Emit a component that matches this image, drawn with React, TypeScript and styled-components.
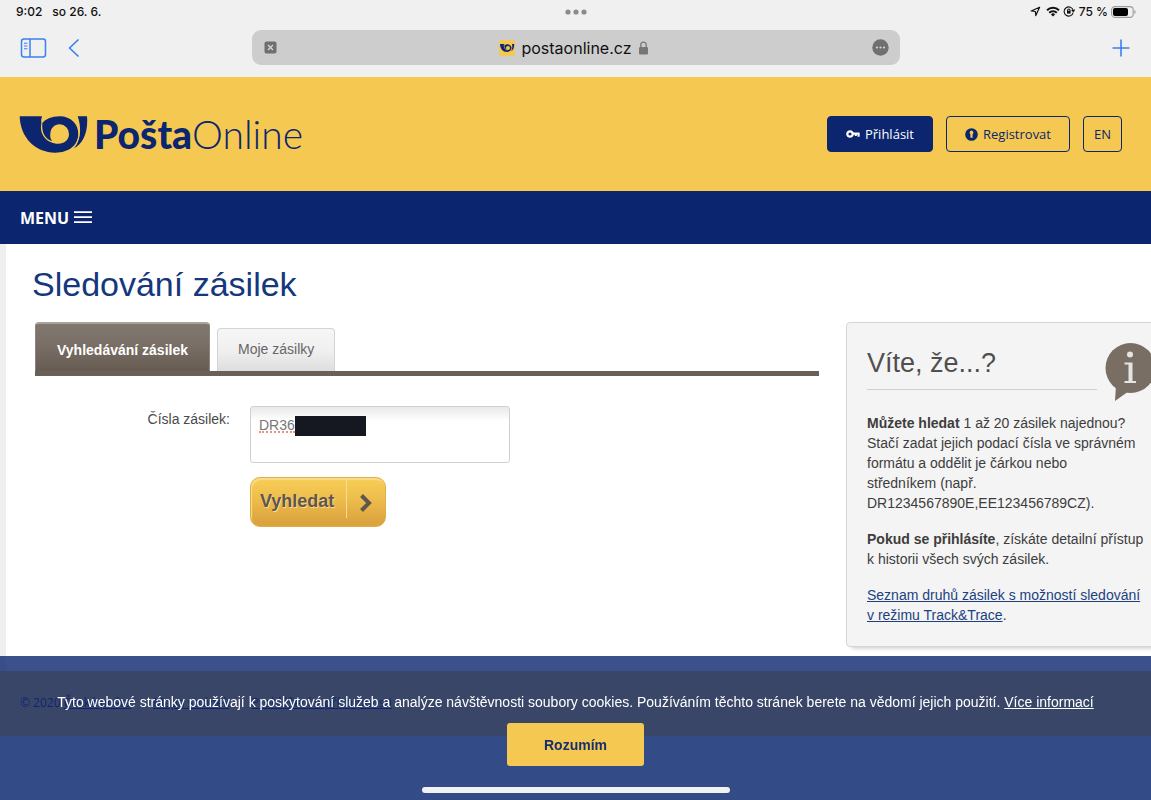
import React from "react";
import styled, { createGlobalStyle, css } from "styled-components";

const navy = "#0b256f";
const yellow = "#f5c951";
const iosBlue = "#3b7ff5";
const helvetica = `"Liberation Sans", Arial, sans-serif`;

const GlobalStyle = createGlobalStyle`
  * { box-sizing: border-box; }
  html { height: 100%; }
  body { margin: 0; min-height: 100%; background: #d3e0e6; font-family: ${helvetica}; overflow-x: hidden; }
  h1, h2, p { margin: 0; font-weight: 400; }
  button { cursor: pointer; font-family: inherit; }
`;

const Page = styled.div`
  overflow: hidden;
`;

const Chrome = styled.div`
  background: #f0f0f0;
  color: #111;
  font-family: Inter, sans-serif;
`;

const StatusBar = styled.div`
  display: grid;
  grid-template-columns: 1fr auto 1fr;
  align-items: center;
  height: 24px;
  padding: 0 15px 0 16px;
  font-size: 12px;
  font-weight: 500;
  line-height: 14px;
`;

const StatusGroup = styled.div<{ $end?: boolean }>`
  display: flex;
  align-items: center;
  gap: ${(p) => (p.$end ? "3px" : "10px")};
  justify-content: ${(p) => (p.$end ? "flex-end" : "flex-start")};
  padding-bottom: 1px;
  svg { display: block; }
`;

const Toolbar = styled.div`
  display: grid;
  grid-template-columns: 1fr 648px 1fr;
  align-items: center;
  height: 53px;
  padding: 0 20px 6px;
`;

const ToolGroup = styled.div<{ $end?: boolean }>`
  display: flex;
  align-items: center;
  gap: 20px;
  justify-content: ${(p) => (p.$end ? "flex-end" : "flex-start")};
`;

const IconButton = styled.button`
  display: flex;
  padding: 0;
  border: 0;
  background: none;
  color: ${iosBlue};
`;

const AddressBar = styled.div`
  display: flex;
  align-items: center;
  justify-content: space-between;
  height: 35px;
  padding: 0 11px 0 12px;
  border-radius: 9px;
  background: #cdcdcd;
`;

const Address = styled.div`
  display: flex;
  align-items: center;
  gap: 6px;
  font-size: 16px;
`;

const Header = styled.header`
  display: flex;
  align-items: center;
  justify-content: space-between;
  height: 114px;
  padding: 0 29px 0 19px;
  background: ${yellow};
`;

const Logo = styled.a`
  display: flex;
  align-items: center;
  gap: 6px;
  color: ${navy};
  font-family: Lato, sans-serif;
  font-size: 39px;
  font-weight: 300;
  line-height: 40px;
  text-decoration: none;
  b { font-weight: 900; }
`;

const Account = styled.div`
  display: flex;
  gap: 13px;
`;

const HeaderButton = styled.button<{ $solid?: boolean; $compact?: boolean }>`
  display: flex;
  align-items: center;
  justify-content: center;
  gap: 5px;
  height: 36px;
  padding: 0 ${(p) => (p.$compact ? "10px" : "18px")};
  border: 1px solid ${navy};
  border-radius: 4px;
  background: ${(p) => (p.$solid ? navy : "transparent")};
  color: ${(p) => (p.$solid ? "#fff" : navy)};
  font-family: "Open Sans", sans-serif;
  font-size: 13px;
`;

const NavBar = styled.nav`
  display: flex;
  align-items: center;
  height: 53px;
  padding: 0 20px;
  background: ${navy};
`;

const MenuButton = styled.button`
  display: flex;
  align-items: center;
  gap: 5px;
  padding: 0;
  border: 0;
  background: none;
  color: #fff;
  font-family: "Open Sans", sans-serif;
  font-size: 16px;
  font-weight: 700;
`;

const Main = styled.main`
  margin-left: 6px;
  padding: 16px 0 24px 29px;
  background: #fff;
  box-shadow: -6px 0 0 #efefef;
`;

const Title = styled.h1`
  margin-left: -3px;
  color: #14377d;
  font-size: 34px;
  line-height: 48px;
`;

const Columns = styled.div`
  display: flex;
  align-items: flex-start;
  gap: 27px;
  margin: 14px -26px 0 0;
`;

const Search = styled.section`
  flex: 1;
  min-width: 0;
`;

const Tabs = styled.div`
  display: flex;
  align-items: flex-end;
  gap: 7px;
  border-bottom: 5px solid #6a6057;
`;

const Tab = styled.button<{ $active?: boolean }>`
  border-radius: 4px 4px 0 0;
  font-size: 14px;
  ${(p) =>
    p.$active
      ? css`
          height: 49px;
          padding: 4px 21px 0;
          border: 1px solid #8d857d;
          border-top: 2px solid #a9a39c;
          border-bottom: 0;
          background: linear-gradient(#80776e, #7a7067 40%, #675c52);
          color: #fff;
          font-weight: 700;
        `
      : css`
          height: 43px;
          padding: 0 20px 2px;
          border: 1px solid #d4d4d4;
          border-bottom: 0;
          background: linear-gradient(#f6f6f6, #f0f0f0 50%, #dedede);
          color: #666;
        `}
`;

const Form = styled.form`
  display: grid;
  grid-template-columns: 195px 260px;
  column-gap: 20px;
  row-gap: 14px;
  padding-top: 30px;
`;

const Label = styled.label`
  padding-top: 4px;
  color: #4a4a4a;
  font-size: 14px;
  line-height: 18px;
  text-align: right;
`;

const Field = styled.div`
  position: relative;
`;

const NumberInput = styled.textarea`
  display: block;
  width: 100%;
  height: 57px;
  padding: 9px 8px;
  border: 1px solid #cfcfcf;
  border-radius: 3px;
  background: linear-gradient(#e9e9e9, #fff 14px);
  color: #777;
  font-family: ${helvetica};
  font-size: 14px;
  line-height: 18px;
  resize: none;
`;

const SpellMark = styled.span`
  position: absolute;
  left: 9px;
  top: 25px;
  width: 36px;
  border-bottom: 2px dotted #ec8d86;
`;

const Redaction = styled.span`
  position: absolute;
  left: 45px;
  top: 10px;
  width: 71px;
  height: 20px;
  background: #151821;
`;

const SubmitButton = styled.button`
  grid-column: 2;
  justify-self: start;
  display: flex;
  align-items: stretch;
  height: 50px;
  padding: 0;
  border: 1px solid #e0ae45;
  border-radius: 10px;
  background: linear-gradient(#f7cd56, #efbf4d 40%, #dca43f 90%);
  box-shadow: inset 1px 2px 1px #f9dc8c;
  color: #5f564e;
  font-size: 18px;
  font-weight: 700;
  text-shadow: 1px 1px 0 #f8dc92;
`;

const SubmitText = styled.span`
  padding: 13px 12px 0 9px;
  line-height: 20px;
`;

const SubmitArrow = styled.span`
  display: flex;
  align-items: center;
  justify-content: center;
  width: 39px;
  height: 40px;
  padding-top: 10px;
  border-left: 1px solid #f8dc8f;
`;

const Hint = styled.aside`
  flex: 0 0 328px;
  height: 325px;
  padding: 20px;
  border: 1px solid #d6d6d6;
  border-radius: 4px;
  background: #f4f4f4;
  box-shadow: 4px 2px 4px -1px #c4c4c4;
  color: #3d3d3d;
  font-size: 14px;
  line-height: 20px;
  white-space: nowrap;
  p { margin-bottom: 16px; }
  a { color: #1d417f; }
`;

const HintHead = styled.div`
  display: flex;
  gap: 8px;
  margin-bottom: 12px;
`;

const HintTitle = styled.h2`
  flex: 0 0 230px;
  height: 47px;
  border-bottom: 1px solid #d0d0d0;
  color: #4f4f4f;
  font-size: 27px;
  line-height: 40px;
`;

const HintIcon = styled.svg`
  flex: none;
`;

const Footer = styled.footer`
  display: flex;
  gap: 22px;
  height: 65px;
  padding: 22px 20px;
  background: ${yellow};
  color: ${navy};
  font-family: "Open Sans", sans-serif;
  font-size: 12px;
  line-height: 20px;
  white-space: nowrap;
  a { color: inherit; }
`;

const CookieBar = styled.div`
  position: fixed;
  inset: auto 0 0 0;
  display: flex;
  flex-direction: column;
  align-items: center;
  padding: 36px 20px 7px;
  background: rgba(11, 37, 110, 0.8);
  color: #fff;
  font-size: 14px;
  line-height: 20px;
  a { color: inherit; }
`;

const AcceptButton = styled.button`
  width: 137px;
  height: 43px;
  margin-top: 11px;
  border: 0;
  border-radius: 3px;
  background: ${yellow};
  color: #16306f;
  font-size: 14px;
  font-weight: 700;
`;

const HomeIndicator = styled.div`
  width: 308px;
  height: 6px;
  margin-top: 21px;
  border-radius: 3px;
  background: #f2f2f2;
`;

function Horn({ width, height }: { width: number; height: number }) {
  return (
    <svg width={width} height={height} viewBox="57 77 205 111" aria-hidden="true">
      <path
        fill={navy}
        d="M58 78H125Q121 90 123 102C134 86 154 78 178 78C212 78 234 102 234 131C234 165 205 187 165 187C105 187 60 142 58 78Z"
      />
      <path fill={navy} d="M232 78H260C264 122 250 160 219 175C242 150 244 112 232 78Z" />
      <path
        fill={yellow}
        d="M178 102A28 28 0 0 1 206 131C206 149 192 160 174 160C140 160 116 132 123 100L126 98C123 128 136 148 156 152C150 146 149 138 150 130C151 114 162 102 178 102Z"
      />
      <path d="M237 120C236 145 230 162 217 177" fill="none" stroke={yellow} strokeWidth="3" />
    </svg>
  );
}

function Status() {
  return (
    <StatusBar>
      <StatusGroup>
        <span>9:02</span>
        <span>so 26. 6.</span>
      </StatusGroup>
      <svg width="22" height="6" viewBox="0 0 22 6" fill="#8b8b8b">
        <circle cx="3" cy="3" r="2.6" />
        <circle cx="11" cy="3" r="2.6" />
        <circle cx="19" cy="3" r="2.6" />
      </svg>
      <StatusGroup $end>
        <svg width="13" height="11" viewBox="0 0 13 11" fill="none" stroke="#111" strokeWidth="1.2" strokeLinejoin="round">
          <path d="M9.6 1.2L1.2 5L5.4 5.5L5.8 9.6Z" />
        </svg>
        <svg width="14" height="11" viewBox="0 0 14 11" fill="none" stroke="#111" strokeWidth="2">
          <path d="M1 4.2A8.5 8.5 0 0 1 13 4.2M3.2 6.7A5.4 5.4 0 0 1 10.8 6.7" />
          <path d="M7 10.6L4.9 8.4A3 3 0 0 1 9.1 8.4Z" fill="#111" stroke="none" />
        </svg>
        <svg width="13" height="11" viewBox="0 0 13 11" fill="none" stroke="#111" strokeWidth="1.1">
          <path d="M10.2 6.5A4.6 4.6 0 1 1 10.2 4.5M8.6 4.2L10.4 5.4L11.6 3.6" />
          <path d="M4.6 5V4.2A1.2 1.2 0 0 1 7 4.2V5" />
          <rect x="4" y="4.9" width="3.6" height="2.7" fill="#111" stroke="none" />
        </svg>
        <span>75 %</span>
        <svg width="25" height="12" viewBox="0 0 25 12">
          <rect x="0.6" y="0.6" width="21.6" height="10.8" rx="3.4" fill="none" stroke="#9b9b9b" strokeWidth="1.1" />
          <rect x="2" y="2" width="15" height="8" rx="2" fill="#000" />
          <path d="M23.4 4A2.2 2.2 0 0 1 23.4 8Z" fill="#9b9b9b" />
        </svg>
      </StatusGroup>
    </StatusBar>
  );
}

function BrowserBar() {
  return (
    <Toolbar>
      <ToolGroup>
        <IconButton aria-label="Boční panel">
          <svg width="27" height="20" viewBox="0 0 27 20" fill="none" stroke="currentColor" strokeWidth="1.5">
            <rect x="1.5" y="1" width="24" height="18" rx="2.4" />
            <path d="M10 1V19" />
            <path d="M4 5.2H7.5M4 8H7.5M4 10.8H7.5" strokeWidth="1.1" />
          </svg>
        </IconButton>
        <IconButton aria-label="Zpět">
          <svg width="13" height="20" viewBox="0 0 13 20" fill="none" stroke="currentColor" strokeWidth="1.7" strokeLinecap="round" strokeLinejoin="round">
            <path d="M11 2L2.5 10L11 18" />
          </svg>
        </IconButton>
      </ToolGroup>
      <AddressBar>
        <IconButton aria-label="Zavřít">
          <svg width="13" height="13" viewBox="0 0 13 13">
            <rect x="0.5" y="0.5" width="12" height="12" rx="2" fill="#6f6f6f" />
            <path d="M4 4L9 9M9 4L4 9" stroke="#d8d8d8" strokeWidth="1.3" />
          </svg>
        </IconButton>
        <Address>
          <svg width="16" height="16" viewBox="0 0 16 16">
            <rect width="16" height="16" rx="2" fill={yellow} />
            <path fill={navy} d="M1 4H5.2L5.6 5.4A4.2 4 0 0 1 12.6 7.6C12.4 10.5 10.5 12 8 12C4 12 1.2 9 1 4Z" />
            <path fill={navy} d="M13 4H15.2C15.3 7.4 14.4 10 12.2 11.2C13.3 9 13.6 6.6 13 4Z" />
            <ellipse cx="9" cy="8" rx="2" ry="2" fill={yellow} />
            <path d="M5.2 4.6C5 7.4 6 9.8 8.4 10.2" fill="none" stroke={yellow} strokeWidth="0.6" />
          </svg>
          <span>postaonline.cz</span>
          <svg width="11" height="14" viewBox="0 0 11 14">
            <rect x="1" y="6" width="9" height="7.4" rx="1.2" fill="#777" />
            <path d="M2.8 6.4V4A2.7 2.9 0 0 1 8.2 4V6.4" fill="none" stroke="#777" strokeWidth="1.3" />
          </svg>
        </Address>
        <IconButton aria-label="Možnosti">
          <svg width="17" height="17" viewBox="0 0 17 17">
            <circle cx="8.5" cy="8.5" r="8.2" fill="#707072" />
            <g fill="#d4d4d4">
              <circle cx="5" cy="8.5" r="1.1" />
              <circle cx="8.5" cy="8.5" r="1.1" />
              <circle cx="12" cy="8.5" r="1.1" />
            </g>
          </svg>
        </IconButton>
      </AddressBar>
      <ToolGroup $end>
        <IconButton aria-label="Nový panel">
          <svg width="20" height="20" viewBox="0 0 20 20" stroke="currentColor" strokeWidth="1.6">
            <path d="M10 1.5V18.5M1.5 10H18.5" />
          </svg>
        </IconButton>
      </ToolGroup>
    </Toolbar>
  );
}

export default function App() {
  return (
    <>
      <GlobalStyle />
      <Page>
        <Chrome>
          <Status />
          <BrowserBar />
        </Chrome>

        <Header>
          <Logo href="#">
            <Horn width={69} height={37} />
            <span>
              <b>Pošta</b>Online
            </span>
          </Logo>
          <Account>
            <HeaderButton $solid>
              <svg width="14" height="8" viewBox="0 0 14 8" fill="none" stroke="#fff">
                <circle cx="4" cy="4" r="2.7" strokeWidth="2.2" />
                <path d="M6.5 3.6H13.6" strokeWidth="2.2" />
                <path d="M9.8 4V6M12.6 4V6.8" strokeWidth="2" />
              </svg>
              Přihlásit
            </HeaderButton>
            <HeaderButton>
              <svg width="13" height="13" viewBox="0 0 13 13">
                <circle cx="6.5" cy="6.5" r="6.3" fill={navy} />
                <path fill={yellow} d="M6.5 2.6A2 2 0 0 0 5.4 6.2V9.8H7.6V6.2A2 2 0 0 0 6.5 2.6Z" />
              </svg>
              Registrovat
            </HeaderButton>
            <HeaderButton $compact>EN</HeaderButton>
          </Account>
        </Header>

        <NavBar>
          <MenuButton>
            MENU
            <svg width="18" height="14" viewBox="0 0 18 14" stroke="#fff" strokeWidth="1.8">
              <path d="M0 1.2H18M0 6.2H18M0 11.2H18" />
            </svg>
          </MenuButton>
        </NavBar>

        <Main>
          <Title>Sledování zásilek</Title>
          <Columns>
            <Search>
              <Tabs role="tablist">
                <Tab $active role="tab" aria-selected="true">
                  Vyhledávání zásilek
                </Tab>
                <Tab role="tab" aria-selected="false">
                  Moje zásilky
                </Tab>
              </Tabs>
              <Form onSubmit={(e) => e.preventDefault()}>
                <Label htmlFor="numbers">Čísla zásilek:</Label>
                <Field>
                  <NumberInput id="numbers" defaultValue="DR36" spellCheck={false} />
                  <SpellMark />
                  <Redaction />
                </Field>
                <SubmitButton type="submit">
                  <SubmitText>Vyhledat</SubmitText>
                  <SubmitArrow>
                    <svg width="14" height="20" viewBox="0 0 14 20" fill="none" stroke="#5f564e" strokeWidth="4">
                      <path d="M2.5 2.5L10 10L2.5 17.5" />
                    </svg>
                  </SubmitArrow>
                </SubmitButton>
              </Form>
            </Search>

            <Hint>
              <HintHead>
                <HintTitle>Víte, že...?</HintTitle>
                <HintIcon width="51" height="58" viewBox="0 0 51 58">
                  <circle cx="25.5" cy="25" r="25" fill="#786e64" />
                  <path d="M11 42L10 58L24 48Z" fill="#786e64" />
                  <g fill="#e6e4e2">
                    <circle cx="25" cy="11.5" r="3" />
                    <path d="M19.5 19.5H27.5V38H31V40H19.5V38H23.5V21.5H19.5Z" />
                  </g>
                </HintIcon>
              </HintHead>
              <p>
                <b>Můžete hledat</b> 1 až 20 zásilek najednou?
                <br />
                Stačí zadat jejich podací čísla ve správném
                <br />
                formátu a oddělit je čárkou nebo
                <br />
                středníkem (např.
                <br />
                DR1234567890E,EE123456789CZ).
              </p>
              <p>
                <b>Pokud se přihlásíte</b>, získáte detailní přístup
                <br />k historii všech svých zásilek.
              </p>
              <p>
                <a href="#">
                  Seznam druhů zásilek s možností sledování
                  <br />v režimu Track&amp;Trace
                </a>
                .
              </p>
            </Hint>
          </Columns>
        </Main>

        <Footer>
          <span>
            © 2020 <a href="#">Česká pošta</a>
          </span>
          <a href="#">Mapa stránek</a>
          <a href="#">Prohlášení o přístupnosti</a>
        </Footer>
      </Page>

      <CookieBar>
        <p>
          Tyto webové stránky používají k poskytování služeb a analýze návštěvnosti soubory cookies. Používáním těchto
          stránek berete na vědomí jejich použití. <a href="#">Více informací</a>
        </p>
        <AcceptButton>Rozumím</AcceptButton>
        <HomeIndicator />
      </CookieBar>
    </>
  );
}
